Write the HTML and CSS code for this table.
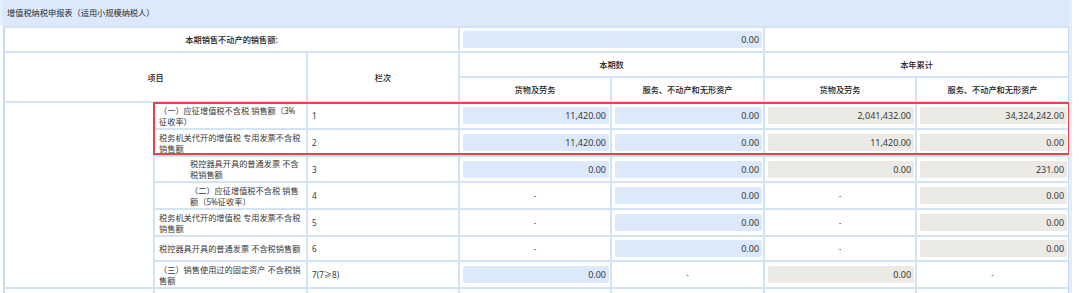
FILE: index.html
```html
<!DOCTYPE html>
<html lang="zh-CN">
<head>
<meta charset="utf-8">
<title>增值税纳税申报表</title>
<link rel="stylesheet" href="styles.css">
</head>
<body>
<div class="panel">
  <div class="title">增值税纳税申报表（适用小规模纳税人）</div>
  <div class="sheet">
    <table class="report">
      <colgroup>
        <col class="c1"><col class="c2"><col class="c3"><col class="c4"><col class="c5"><col class="c6"><col class="c7">
      </colgroup>
      <tr class="h25">
        <td colspan="3" class="hd">本期销售不动产的销售额:</td>
        <td colspan="2" class="fc"><div class="fld blue">0.00</div></td>
        <td colspan="2"></td>
      </tr>
      <tr class="h25">
        <td colspan="2" rowspan="2" class="hd">项目</td>
        <td rowspan="2" class="hd">栏次</td>
        <td colspan="2" class="hd">本期数</td>
        <td colspan="2" class="hd">本年累计</td>
      </tr>
      <tr class="h25">
        <td class="hd">货物及劳务</td>
        <td class="hd">服务、不动产和无形资产</td>
        <td class="hd">货物及劳务</td>
        <td class="hd">服务、不动产和无形资产</td>
      </tr>
      <tr class="h27">
        <td rowspan="7"></td>
        <td class="lbl">（一）应征增值税不含税 销售额（3%<br>征收率）</td>
        <td class="no">1</td>
        <td class="fc"><div class="fld blue">11,420.00</div></td>
        <td class="fc"><div class="fld blue">0.00</div></td>
        <td class="fc"><div class="fld grey">2,041,432.00</div></td>
        <td class="fc"><div class="fld grey">34,324,242.00</div></td>
      </tr>
      <tr class="h27">
        <td class="lbl">税务机关代开的增值税 专用发票不含税<br>销售额</td>
        <td class="no">2</td>
        <td class="fc"><div class="fld blue">11,420.00</div></td>
        <td class="fc"><div class="fld blue">0.00</div></td>
        <td class="fc"><div class="fld grey">11,420.00</div></td>
        <td class="fc"><div class="fld grey">0.00</div></td>
      </tr>
      <tr class="h26">
        <td class="lbl ind">税控器具开具的普通发票 不含<br>税销售额</td>
        <td class="no">3</td>
        <td class="fc"><div class="fld blue">0.00</div></td>
        <td class="fc"><div class="fld blue">0.00</div></td>
        <td class="fc"><div class="fld grey">0.00</div></td>
        <td class="fc"><div class="fld grey">231.00</div></td>
      </tr>
      <tr class="h27">
        <td class="lbl ind">（二）应征增值税不含税 销售<br>额（5%征收率）</td>
        <td class="no">4</td>
        <td class="dash">-</td>
        <td class="fc"><div class="fld blue">0.00</div></td>
        <td class="dash">-</td>
        <td class="fc"><div class="fld grey">0.00</div></td>
      </tr>
      <tr class="h27">
        <td class="lbl">税务机关代开的增值税 专用发票不含税<br>销售额</td>
        <td class="no">5</td>
        <td class="dash">-</td>
        <td class="fc"><div class="fld blue">0.00</div></td>
        <td class="dash">-</td>
        <td class="fc"><div class="fld grey">0.00</div></td>
      </tr>
      <tr class="h25">
        <td class="lbl">税控器具开具的普通发票 不含税销售额</td>
        <td class="no">6</td>
        <td class="dash">-</td>
        <td class="fc"><div class="fld blue">0.00</div></td>
        <td class="dash">-</td>
        <td class="fc"><div class="fld grey">0.00</div></td>
      </tr>
      <tr class="h27">
        <td class="lbl">（三）销售使用过的固定资产 不含税销<br>售额</td>
        <td class="no">7(7≥8)</td>
        <td class="fc"><div class="fld blue">0.00</div></td>
        <td class="dash">-</td>
        <td class="fc"><div class="fld grey">0.00</div></td>
        <td class="dash">-</td>
      </tr>
      <tr class="h27">
        <td></td><td></td><td></td><td></td><td></td><td></td><td></td>
      </tr>
    </table>
    <div class="highlight"></div>
  </div>
</div>
</body>
</html>
```

FILE: styles.css
```css
html, body {
  margin: 0;
  padding: 0;
  background: #ffffff;
}

body {
  font-family: "Noto Sans", "Noto Sans CJK SC", sans-serif;
  color: #333333;
  overflow: hidden;
  height: 293px;
}

.panel {
  width: 1072px;
  height: 293px;
  position: relative;
  border-right: 3px solid #e6edf6;
  box-sizing: border-box;
  overflow: hidden;
}

.title {
  height: 26px;
  line-height: 26px;
  background: #dce9fa;
  font-size: 8.2px;
  padding-left: 5px;
  color: #2a2a2a;
  width: 1063px;
  border-left: 2px solid #e7f0fb;
}

.sheet {
  position: relative;
  padding-left: 3px;
}

.report {
  border-collapse: collapse;
  table-layout: fixed;
  width: 1066px;
}

.c1 { width: 150px; }
.c2 { width: 153px; }
.c3 { width: 152px; }
.c4 { width: 152px; }
.c5 { width: 153px; }
.c6 { width: 152px; }
.c7 { width: 153px; }

.report td {
  border: 2px solid #d3e3f6;
  padding: 0 4px;
  font-size: 8.2px;
  line-height: 11px;
  vertical-align: middle;
  overflow: hidden;
}

.report td:first-child {
  border-left-color: #c4daf3;
}

.report td:last-child {
  border-right-color: #c4daf3;
}

.h25 td { height: 23px; }
.h26 td { height: 24px; }
.h27 td { height: 25px; }

.hd {
  text-align: center;
  color: #222222;
  font-weight: 500;
}

.lbl {
  text-align: left;
  white-space: nowrap;
  color: #383838;
}

.lbl.ind {
  padding-left: 35px;
}

.no {
  color: #383838;
  font-size: 9px;
}

.report td.fc {
  padding: 0 1px 0 3px;
}

.fld {
  height: 17px;
  line-height: 17px;
  border-radius: 2px;
  text-align: right;
  padding-right: 3px;
  font-size: 9px;
  color: #383838;
}

.fld.blue {
  background: #dbe9fb;
}

.fld.grey {
  background: #ebeae4;
}

.dash {
  text-align: center;
  color: #8a4a3a;
  font-size: 8px;
}

.highlight {
  position: absolute;
  left: 153px;
  top: 76px;
  width: 917px;
  height: 53px;
  border: 2px solid #e8434b;
  box-sizing: border-box;
  pointer-events: none;
}
```
